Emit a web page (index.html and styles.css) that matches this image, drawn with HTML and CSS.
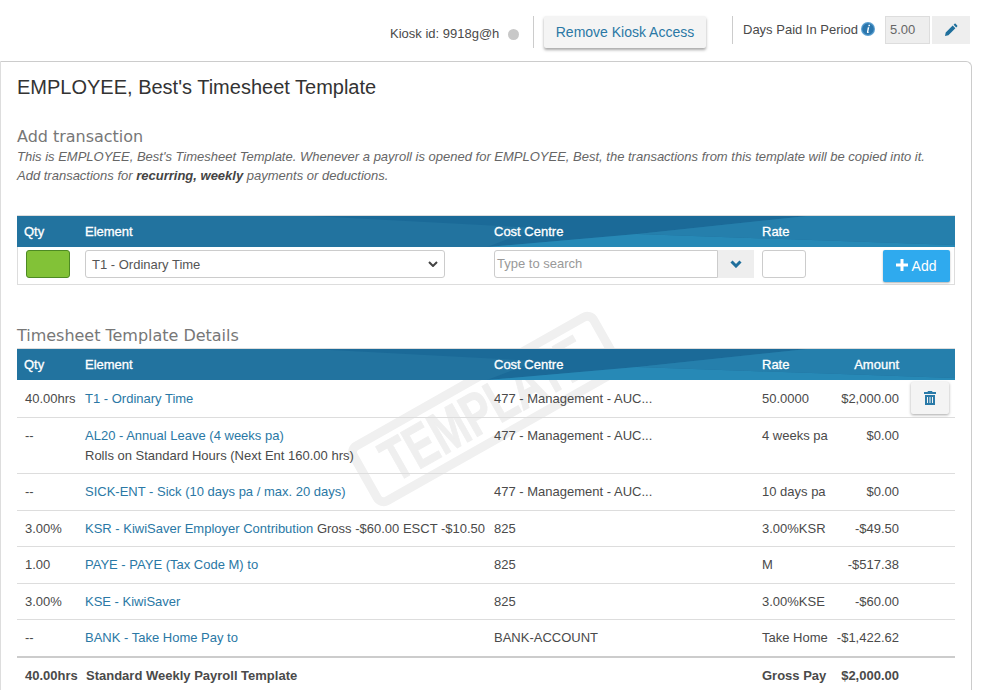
FILE: index.html
```html
<!DOCTYPE html>
<html lang="en">
<head>
<meta charset="utf-8">
<title>Timesheet Template</title>
<link rel="stylesheet" href="styles.css">
</head>
<body>
<div class="topbar">
  <span class="kiosk">Kiosk id: 9918g@h</span><span class="dot"></span>
  <span class="divider"></span>
  <button class="btn-kiosk">Remove Kiosk Access</button>
  <span class="divider short"></span>
  <span class="days">Days Paid In Period</span>
  <svg class="info" viewBox="0 0 14 14" width="14" height="14"><circle cx="7" cy="7" r="7" fill="#5a9fd0"/><circle cx="7" cy="7" r="5.8" fill="#2a76ad"/><path d="M7.600 2.800h1.500l-.3 1.500H7.300zM6.800 5.200h1.500L7.400 9.600c-.1.400.2.500.7.200l.1.500c-.9.800-2.500 1-2.300-.3z" fill="#fff"/></svg>
  <span class="days-value">5.00</span>
  <span class="edit"><svg viewBox="0 0 14 14" width="14" height="14"><path d="M1 13l.7-3.400 7-7 2.700 2.700-7 7zM9.600 1.800l1-1c.3-.3.700-.3 1 0l1.600 1.600c.3.300.3.700 0 1l-1 1z" fill="#1f6f9c"/></svg></span>
</div>
<main class="card">
  <h1 class="title">EMPLOYEE, Best's Timesheet Template</h1>
  <h2 class="section add-title">Add transaction</h2>
  <p class="intro">This is EMPLOYEE, Best's Timesheet Template. Whenever a payroll is opened for EMPLOYEE, Best, the transactions from this template will be copied into it.<br>Add transactions for <b>recurring, weekly</b> payments or deductions.</p>

  <div class="thead row-grid first-head">
    <svg class="swoosh" viewBox="0 0 938 31" preserveAspectRatio="none"><polygon points="295,0 790,0 620,18 470,31 520,12" fill="#1b6a98"/><polygon points="470,31 620,18 938,29 938,31" fill="#2789b6"/><polygon points="790,0 938,0 938,29 620,18" fill="#257fac"/></svg>
    <span>Qty</span><span>Element</span><span>Cost Centre</span><span>Rate</span>
  </div>
  <div class="add-row row-grid">
    <span class="cell-qty"><span class="qty-input"></span></span>
    <span class="select"><span>T1 - Ordinary Time</span><svg viewBox="0 0 10 6" width="10" height="6"><path d="M1 1l4 4 4-4" fill="none" stroke="#444" stroke-width="2"/></svg></span>
    <span class="search"><span class="search-input">Type to search</span><span class="search-btn"><svg viewBox="0 0 12 8" width="12" height="8"><path d="M1.500 1.500L6 6l4.500-4.500" fill="none" stroke="#1f6f9c" stroke-width="3"/></svg></span></span>
    <span class="rate-input"></span>
    <button class="btn-add"><svg viewBox="0 0 12 12" width="12" height="12"><path d="M4.500 0h3v4.500H12v3H7.500V12h-3V7.500H0v-3h4.500z" fill="#fff"/></svg> Add</button>
  </div>

  <h2 class="section details-title">Timesheet Template Details</h2>
  <div class="details">
    <div class="stamp"><span>TEMPLATE</span></div>
    <div class="thead row-grid">
      <svg class="swoosh" viewBox="0 0 938 31" preserveAspectRatio="none"><polygon points="295,0 790,0 620,18 470,31 520,12" fill="#1b6a98"/><polygon points="470,31 620,18 938,29 938,31" fill="#2789b6"/><polygon points="790,0 938,0 938,29 620,18" fill="#257fac"/></svg>
      <span>Qty</span><span>Element</span><span>Cost Centre</span><span>Rate</span><span class="num">Amount</span>
    </div>
    <div class="row row-grid h38">
      <span>40.00hrs</span><span><a>T1 - Ordinary Time</a></span><span>477 - Management - AUC...</span><span>50.0000</span><span class="num">$2,000.00</span>
      <span class="act"><button class="btn-del"><svg viewBox="0 0 12 14" width="12" height="14"><path d="M4 0h4l.5 1H12v2H0V1h3.500zM1 4h10v10H1zM3 6v6h1V6zm2.500 0v6h1V6zM8 6v6h1V6z" fill="#2a7aa8" fill-rule="evenodd"/></svg></button></span>
    </div>
    <div class="row row-grid h56">
      <span>--</span><span class="two-line"><a>AL20 - Annual Leave (4 weeks pa)</a><br>Rolls on Standard Hours (Next Ent 160.00 hrs)</span><span>477 - Management - AUC...</span><span>4 weeks pa</span><span class="num">$0.00</span>
    </div>
    <div class="row row-grid h37">
      <span>--</span><span><a>SICK-ENT - Sick (10 days pa / max. 20 days)</a></span><span>477 - Management - AUC...</span><span>10 days pa</span><span class="num">$0.00</span>
    </div>
    <div class="row row-grid h36">
      <span>3.00%</span><span><a>KSR - KiwiSaver Employer Contribution</a> Gross -$60.00 ESCT -$10.50</span><span>825</span><span>3.00%KSR</span><span class="num">-$49.50</span>
    </div>
    <div class="row row-grid h37">
      <span>1.00</span><span><a>PAYE - PAYE (Tax Code M) to</a></span><span>825</span><span>M</span><span class="num">-$517.38</span>
    </div>
    <div class="row row-grid h36">
      <span>3.00%</span><span><a>KSE - KiwiSaver</a></span><span>825</span><span>3.00%KSE</span><span class="num">-$60.00</span>
    </div>
    <div class="row row-grid h37">
      <span>--</span><span><a>BANK - Take Home Pay to</a></span><span>BANK-ACCOUNT</span><span>Take Home</span><span class="num">-$1,422.62</span>
    </div>
    <div class="row row-grid total">
      <span>40.00hrs</span><span class="total-label">Standard Weekly Payroll Template</span><span></span><span>Gross Pay</span><span class="num">$2,000.00</span>
    </div>
  </div>
</main>
</body>
</html>
```
FILE: styles.css
```css
* { box-sizing: border-box; }
html, body { margin: 0; height: 690px; overflow: hidden; background: #fff; }
body { font-family: "Liberation Sans", Arial, sans-serif; font-size: 13px; color: #4a4a4a; }
button { font-family: inherit; border: 0; }

.topbar { height: 61px; display: flex; align-items: flex-start; padding: 16px 0 0 390px; }
.kiosk { margin-top: 10px; width: 109px; white-space: nowrap; }
.dot { width: 11px; height: 11px; border-radius: 50%; background: #c8c8c8; margin: 13px 14px 0 9px; }
.divider { width: 1px; height: 32px; background: #ccc; }
.divider.short { height: 28px; }
.btn-kiosk { width: 162px; height: 32px; margin: 0 26px 0 10px; background: #f4f4f4; color: #2a78a5; font-size: 14px; border-radius: 2px; box-shadow: 0 2px 3px rgba(0,0,0,.35); }
.days { margin: 6px 3px 0 10px; white-space: nowrap; }
.info { margin: 6px 10px 0 0; }
.days-value { width: 45px; height: 28px; background: #eee; border: 1px solid #ddd; line-height: 26px; padding-left: 4px; color: #666; }
.edit { width: 38px; height: 28px; background: #eee; margin-left: 2px; display: flex; align-items: center; justify-content: center; }

.card { position: relative; width: 972px; height: 640px; border: 1px solid #ccc; border-bottom: 0; border-left-color: #ddd; border-radius: 0 6px 0 0; padding: 0 0 0 16px; }
.title { margin: 13px 0 0; font-size: 20px; font-weight: 400; line-height: 24px; color: #333; }
.section { margin: 0; font-family: "DejaVu Sans", sans-serif; font-size: 16px; font-weight: 400; color: #777; line-height: 20px; letter-spacing: -.02px; }
.add-title { margin-top: 28px; }
.intro { margin: 0; font-style: italic; line-height: 19px; color: #666; height: 38px; white-space: nowrap; }
.intro b { color: #444; }

.row-grid { display: grid; grid-template-columns: 68px 409px 268px 70px 67px 56px; width: 938px; align-items: center; }
.thead { position: relative; height: 32px; background: #22739f; border-top: 1px solid #ddd; color: #fff; -webkit-text-stroke: .3px #fff; overflow: hidden; }
.thead > span { position: relative; }
.thead > span:first-of-type { padding-left: 7px; }
.swoosh { position: absolute; left: 0; top: 0; width: 938px; height: 31px; }
.first-head { margin-top: 30px; }

.add-row { height: 38px; border: 1px solid #ddd; border-top: 0; width: 938px; align-items: start; padding-top: 3px; grid-template-columns: 67px 409px 268px 121px 67px; }
.cell-qty { padding-left: 8px; }
.qty-input { display: block; width: 44px; height: 28px; background: #82c237; border: 1px solid #4d8a23; border-radius: 3px; }
.select { width: 360px; height: 28px; border: 1px solid #ccc; border-radius: 3px; padding: 0 6px; display: flex; align-items: center; justify-content: space-between; color: #555; }
.search { display: flex; width: 260px; height: 28px; }
.search-input { flex: 1; border: 1px solid #ccc; border-radius: 3px 0 0 3px; padding-left: 2px; line-height: 25px; color: #999; }
.search-btn { width: 36px; background: #eee; display: flex; align-items: center; justify-content: center; }
.rate-input { width: 44px; height: 28px; border: 1px solid #ccc; border-radius: 3px; }
.btn-add { justify-self: start; width: 67px; height: 32px; background: #2faaee; color: #fff; font-size: 14px; border-radius: 2px; box-shadow: 0 1px 2px rgba(0,0,0,.3); }

.details-title { margin-top: 41px; }
.details { position: relative; width: 938px; margin-top: 2px; }
.row { position: relative; border-bottom: 1px solid #ddd; align-items: start; padding-top: 10px; line-height: 15px; white-space: nowrap; }
.row > span:first-child { padding-left: 8px; }
.row a { color: #2a78a5; }
.h38 { height: 38px; padding-top: 11px; }
.h37 { height: 37px; }
.h36 { height: 36px; }
.h56 { height: 56px; }
.two-line { line-height: 20px; margin-top: -2px; }
.num { text-align: right; }
.act { padding-left: 12px; margin-top: -11px; padding-top: 2px; }
.btn-del { width: 38px; height: 32px; background: #f4f4f4; border-radius: 2px; box-shadow: 0 1px 3px rgba(0,0,0,.35); display: flex; align-items: center; justify-content: center; }
.total { border-top: 2px solid #ccc; border-bottom: 0; font-weight: 700; height: 34px; padding-top: 10px; margin-top: -1px; }
.total-label { padding-left: 1px; }

.stamp { position: absolute; left: 326px; top: 25px; width: 285px; height: 72px; transform: rotate(-29.500deg); border: 9px solid #f0f0f0; border-radius: 12px; color: #efefef; -webkit-text-stroke: 1px #efefef; font: 700 60px/54px "Liberation Sans", sans-serif; text-align: center; white-space: nowrap; }
.stamp span { display: inline-block; transform: scaleX(.72); transform-origin: center; margin: 0 -60px; }
```
